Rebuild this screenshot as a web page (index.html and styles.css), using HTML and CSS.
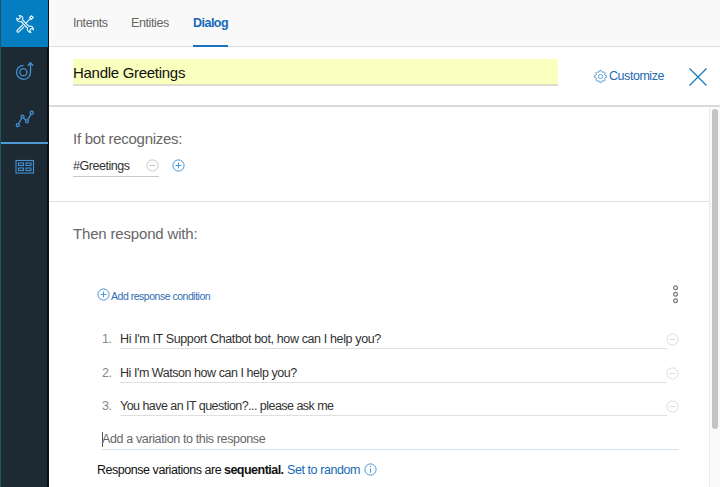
FILE: index.html
```html
<!DOCTYPE html>
<html lang="en">
<head>
<meta charset="utf-8">
<title>Dialog</title>
<link rel="stylesheet" href="styles.css">
</head>
<body>
<svg width="0" height="0" class="defs">
  <symbol id="minus" viewBox="0 0 13 13"><circle cx="6.5" cy="6.5" r="5.6"/><path d="M3.6 6.5h5.8"/></symbol>
  <symbol id="plus" viewBox="0 0 13 13"><circle cx="6.5" cy="6.5" r="5.6"/><path d="M3.6 6.5h5.8M6.5 3.6v5.8"/></symbol>
</svg>
<div class="app">
  <nav class="sidebar">
    <a class="side-item active"><svg width="20" height="20" viewBox="0 0 20 20">
      <path d="M4.4 1.5A3.2 3.2 0 0 1 7.6 6L14 12.4a3.2 3.2 0 0 1 4.4 3.2l-2.1-1-1.6 1.6 1 2.1A3.2 3.2 0 0 1 12.5 14L6.1 7.5a3.2 3.2 0 0 1-4.4-3.2l2.1 1 1.6-1.6z"/>
      <path d="M16.6 1.8l1.6 1.6-1.7 2-1.9-1.9zM15.4 4.6L10.9 9.1"/>
      <path d="M7.8 10.8L2.3 16.2a1.1 1.1 0 0 0 1.6 1.6l5.5-5.4"/>
    </svg></a>
    <a class="side-item"><svg width="20" height="20" viewBox="0 0 20 20">
      <circle cx="8.4" cy="11.2" r="3.5"/>
      <path d="M8.6 4.3A7 7 0 1 0 15.5 11V2M12.8 4.7l2.7-2.9 2.7 2.9"/>
    </svg></a>
    <a class="side-item"><svg width="20" height="20" viewBox="0 0 20 20">
      <circle cx="2.8" cy="16.2" r="1.5"/><circle cx="7.5" cy="7.6" r="1.5"/><circle cx="12" cy="12.3" r="1.5"/><circle cx="16.7" cy="3.7" r="1.5"/>
      <path d="M3.5 14.8L6.8 9M8.5 8.7l2.5 2.5M12.7 10.9L16 5.1"/>
    </svg></a>
    <a class="side-item last"><svg width="20" height="16" viewBox="0 0 20 16">
      <rect x="1" y="1.5" width="17.5" height="12.5"/>
      <rect x="3.5" y="4" width="5" height="2.5"/><rect x="11" y="4" width="5" height="2.5"/>
      <rect x="3.5" y="9" width="5" height="2.5"/><rect x="11" y="9" width="5" height="2.5"/>
    </svg></a>
  </nav>
  <main class="main">
    <header class="tabs">
      <a class="tab t-intents">Intents</a><a class="tab t-entities">Entities</a><a class="tab selected">Dialog</a>
    </header>
    <section class="node-head">
      <div class="node-name"><span>Handle Greetings</span></div>
      <a class="customize"><svg width="13" height="13" viewBox="0 0 13 13"><circle cx="6.5" cy="6.5" r="2.1"/><path d="M5.3 1.9L5.6.6h1.8l.3 1.3 1.2.5 1.1-.7 1.3 1.3-.7 1.1.5 1.2 1.3.3v1.8l-1.3.3-.5 1.2.7 1.1-1.3 1.3-1.1-.7-1.2.5-.3 1.3H5.6l-.3-1.3-1.2-.5-1.1.7L1.7 10l.7-1.1-.5-1.2L.6 7.4V5.6l1.3-.3.5-1.2L1.7 3 3 1.7l1.1.7z"/></svg><span>Customize</span></a>
      <svg class="close" width="18" height="18" viewBox="0 0 18 18"><path d="M.5.5l17 17M17.5.5l-17 17"/></svg>
    </section>
    <div class="body">
      <div class="content">
        <section class="recognize">
          <h2 class="h-if">If bot recognizes:</h2>
          <div class="conditions">
            <div class="condition"><span>#Greetings</span><svg class="ico gray"><use href="#minus"/></svg></div>
            <svg class="ico blue"><use href="#plus"/></svg>
          </div>
        </section>
        <section class="respond">
          <h2 class="h-then">Then respond with:</h2>
          <div class="response-bar">
            <a class="add-condition"><svg class="ico blue"><use href="#plus"/></svg><span>Add response condition</span></a>
            <svg class="more" width="7" height="20" viewBox="0 0 7 20"><circle cx="3.5" cy="2.7" r="1.9"/><circle cx="3.5" cy="9.2" r="1.9"/><circle cx="3.5" cy="15.7" r="1.9"/></svg>
          </div>
          <div class="variations">
            <div class="variation"><b>1.</b><div class="text v1"><span>Hi I'm IT Support Chatbot bot, how can I help you?</span></div><svg class="ico pale"><use href="#minus"/></svg></div>
            <div class="variation"><b>2.</b><div class="text v2"><span>Hi I'm Watson how can I help you?</span></div><svg class="ico pale"><use href="#minus"/></svg></div>
            <div class="variation"><b>3.</b><div class="text v3"><span>You have an IT question?... please ask me</span></div><svg class="ico pale"><use href="#minus"/></svg></div>
          </div>
          <div class="new-variation"><i class="caret"></i><span>Add a variation to this response</span></div>
          <p class="mode"><span class="m1">Response variations are</span><strong>sequential.</strong><a>Set to random</a><svg class="ico blue" viewBox="0 0 13 13"><circle cx="6.5" cy="6.5" r="5.6"/><path d="M6.5 5.5v4.3M6.5 3v1.2"/></svg></p>
        </section>
      </div>
      <div class="scrollbar"><div class="thumb"></div></div>
    </div>
  </main>
</div>
</body>
</html>
```
FILE: styles.css
```css
* { box-sizing: border-box; }
body { margin: 0; font-family: "Liberation Sans", Arial, sans-serif; font-size: 12.5px; color: #323232; background: #fff; overflow: hidden; }
.defs { position: absolute; }
svg { display: block; flex: none; fill: none; stroke: currentColor; }
span, strong, a { white-space: nowrap; }
.app { display: flex; width: 720px; height: 487px; }

.sidebar { width: 49px; flex: none; background: #1d2a34; border-left: 1px solid #1d5363; border-right: 2px solid #0b1116; color: #4292d4; }
.side-item { display: flex; align-items: center; height: 48px; padding-left: 14px; }
.side-item svg { stroke-width: 1.3; }
.side-item.active { height: 47px; margin-right: -1px; background: #057dc1; color: #e2f3ff; }
.side-item.active svg { stroke-width: 1.2; }
.side-item.last { height: 48px; margin-top: -1px; border-top: 2px solid #4e9ad8; margin-right: -1px; }
.side-item.last svg { stroke-width: 1.1; }

.main { flex: 1; min-width: 0; display: flex; flex-direction: column; }
.tabs { height: 47px; flex: none; display: flex; gap: 24px; padding-left: 24px; background: #f9f9f9; border-bottom: 1px solid #dcdcdc; color: #666; }
.tab { height: 47px; width: 34px; line-height: 47px; }
.t-intents { letter-spacing: -.42px; }
.t-entities { width: 38px; letter-spacing: -.38px; }
.selected { width: 35px; color: #1369b8; font-weight: bold; border-bottom: 2px solid #1873c3; letter-spacing: -.52px; }

.node-head { height: 60px; flex: none; display: flex; align-items: flex-start; padding: 12px 0 0 24px; border-bottom: 2px solid #dadada; }
.node-name { width: 485px; height: 27px; background: #f9ffbc; border-bottom: 2px solid #ddddcf; font-size: 15px; line-height: 28px; letter-spacing: -.29px; color: #111; }
.customize { display: flex; align-items: center; gap: 2px; width: 95px; height: 28px; margin: 3px 0 0 36px; color: #2468b0; letter-spacing: -.45px; }
.customize svg { color: #5598d0; stroke-width: .9; }
.close { margin: 9px 0 0; color: #1779bd; stroke-width: 1.2; }

.body { flex: 1; display: flex; }
.content { width: 660px; flex: none; }
.recognize { height: 95px; padding: 23px 0 0 24px; border-bottom: 1px solid #e0e0e0; }
h2 { margin: 0; font-size: 15px; line-height: 18px; font-weight: normal; color: #666; white-space: nowrap; }
.h-if { letter-spacing: -.28px; }
.h-then { letter-spacing: -.17px; }
.ico { width: 13px; height: 13px; }
.blue { color: #4795d3; }
.gray { color: #c5c5c5; }
.pale { color: #dcdcdc; }
.conditions { display: flex; align-items: flex-start; gap: 13px; margin-top: 4px; }
.conditions > .ico { margin-top: 7px; }
.condition { display: flex; align-items: center; justify-content: space-between; width: 86px; height: 25px; padding-top: 3px; border-bottom: 1px solid #c9c9c9; letter-spacing: -.47px; }
.condition .ico { margin-top: -1px; }

.respond { padding: 23px 0 0 48px; }
.h-then { margin-left: -24px; }
.response-bar { display: flex; justify-content: space-between; width: 582px; height: 20px; margin-top: 42px; }
.add-condition { display: flex; align-items: flex-start; gap: 1px; height: 20px; color: #2f6db2; font-size: 10.5px; letter-spacing: -.48px; }
.add-condition svg { margin-top: 3px; }
.add-condition span { line-height: 22px; }
.more { color: #777; stroke-width: 1.2; }
.variations { display: grid; grid-template-rows: 34px 33px 34px; margin-top: 19px; }
.variation { display: flex; padding-left: 5px; }
.variation b { width: 18px; line-height: 31px; font-weight: normal; letter-spacing: -.4px; color: #888; }
.text { width: 547px; height: 25px; line-height: 31px; border-bottom: 1px solid #dfdfdf; }
.v1 { letter-spacing: -.37px; }
.v2 { letter-spacing: -.45px; }
.v3 { letter-spacing: -.54px; }
.variation svg { margin: 9px 0 0 -1px; }
.new-variation { display: flex; align-items: center; width: 577px; height: 26px; margin: -1px 0 0 5px; padding-top: 5px; border-bottom: 1px solid #d3e2ef; letter-spacing: -.37px; color: #666; }
.caret { width: 1px; height: 15px; margin-right: -1px; background: #555; }
.mode { display: flex; align-items: center; margin: 12px 0 0; height: 15px; letter-spacing: -.46px; color: #111; }
.m1 { width: 127px; }
.mode strong { width: 63px; letter-spacing: -.52px; }
.mode a { width: 77px; letter-spacing: -.42px; color: #1769b5; }

.scrollbar { width: 11px; background: #fafafa; border-left: 1px solid #ececec; padding: 2px 2px 0 2px; }
.thumb { height: 320px; width: 6px; border-radius: 3px; background: #c4c4c4; }
```
